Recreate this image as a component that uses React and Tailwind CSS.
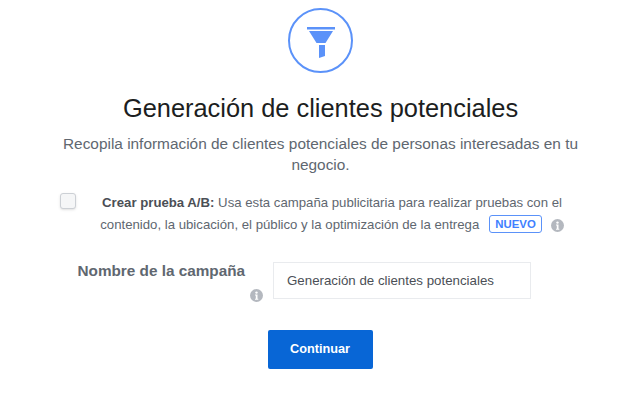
const InfoDot = () => (
  <span className="flex h-[13px] w-[13px] items-center justify-center rounded-full bg-[#b4b8bf]">
    <svg width="13" height="13" viewBox="0 0 13 13">
      <circle cx="6.5" cy="3.6" r="1.2" fill="#fff" />
      <path d="M5 5.6h2.5v4.2h.8v1H5v-1h.8V6.6H5z" fill="#fff" />
    </svg>
  </span>
);

const FunnelIcon = () => (
  <div className="flex h-[65px] w-[65px] items-center justify-center rounded-full border-[2.5px] border-[#5b92f9]">
    <svg width="28" height="31" viewBox="0 0 28 31" className="mt-[3px]">
      <rect x="0" y="0" width="28" height="2.5" fill="#5b92f9" />
      <path d="M2 4h24L18.5 16h-9z" fill="#5b92f9" />
      <path d="M12 18h6v11l-6 2z" fill="#5b92f9" />
    </svg>
  </div>
);

export default function App() {
  return (
    <div className="flex h-[403px] w-[630px] flex-col items-center overflow-hidden bg-white pl-[11px] font-['Liberation_Sans',Arial,sans-serif]">
      <div className="mt-[8px]">
        <FunnelIcon />
      </div>

      <h1 className="mt-[20px] text-[25.4px] leading-[30px] whitespace-nowrap text-[#1c1e21]">
        Generación de clientes potenciales
      </h1>

      <p className="mt-[10px] w-[520px] text-center text-[15.4px] leading-[21px] text-[#606770]">
        Recopila información de clientes potenciales de personas interesadas en tu negocio.
      </p>

      <div className="mt-[17px] -ml-[11px] flex w-[630px] pl-[60px]">
        <span className="mt-[1px] h-[16px] w-[16px] shrink-0 rounded-[3px] border border-[#ccd0d5] bg-[#f5f6f7] shadow-sm" />
        <div className="ml-[24px] w-[464px] text-center text-[13.2px] leading-[22px] whitespace-nowrap text-[#606770]">
          <div>
            <b className="text-[#4b4f56]">Crear prueba A/B:</b> Usa esta campaña publicitaria para realizar pruebas con el
          </div>
          <div className="flex items-center justify-center">
            <span>contenido, la ubicación, el público y la optimización de la entrega</span>
            <span className="mb-[2px] ml-[10px] rounded-[3px] border-[1.5px] border-[#5b92f9] px-[5px] text-[11.4px] leading-[16px] font-bold text-[#4080ff]">
              NUEVO
            </span>
            <span className="ml-[9px]">
              <InfoDot />
            </span>
          </div>
        </div>
      </div>

      <div className="mt-[26px] -ml-[11px] flex w-[630px]">
        <div className="flex w-[263px] flex-col items-end">
          <label className="mr-[18px] text-[15.3px] leading-[18px] font-bold whitespace-nowrap text-[#606770]">
            Nombre de la campaña
          </label>
          <span className="mt-[9px]">
            <InfoDot />
          </span>
        </div>
        <div className="ml-[10px] flex h-[37px] w-[258px] items-center border border-[#e9ebee] bg-white pl-[13px] text-[13.3px] whitespace-nowrap text-[#4b4f56]">
          Generación de clientes potenciales
        </div>
      </div>

      <button
        type="button"
        className="mt-[28px] -ml-[1px] h-[39px] w-[105px] rounded-[2px] bg-[#0866d6] text-[12.7px] font-bold text-white"
      >
        Continuar
      </button>
    </div>
  );
}
